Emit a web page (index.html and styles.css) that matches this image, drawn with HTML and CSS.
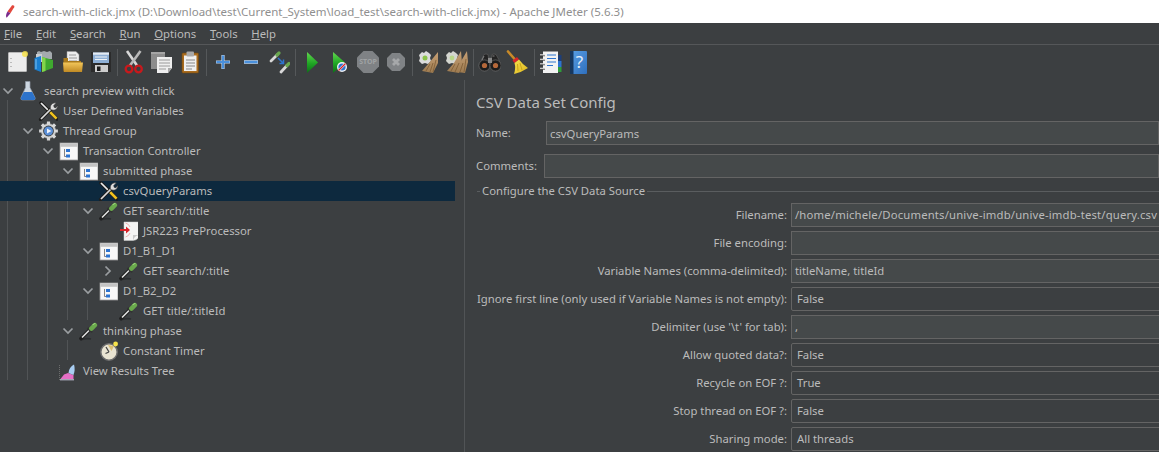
FILE: index.html
```html
<!DOCTYPE html>
<html lang="en">
<head>
<meta charset="utf-8">
<title>search-with-click.jmx - Apache JMeter (5.6.3)</title>
<link rel="stylesheet" href="styles.css">
</head>
<body>
<svg class="defs" width="0" height="0" aria-hidden="true">
  <defs>
    <linearGradient id="g-run" x1="0" y1="0" x2="0" y2="1"><stop offset="0" stop-color="#63d84f"/><stop offset=".55" stop-color="#1fa524"/><stop offset="1" stop-color="#0d6f18"/></linearGradient>
    <linearGradient id="g-folder" x1="0" y1="0" x2="0" y2="1"><stop offset="0" stop-color="#f2c65a"/><stop offset="1" stop-color="#c08a24"/></linearGradient>
    <linearGradient id="g-help" x1="0" y1="0" x2="1" y2="1"><stop offset="0" stop-color="#5aa0e6"/><stop offset="1" stop-color="#2f6fbd"/></linearGradient>
    <linearGradient id="g-broom" x1="0" y1="0" x2="0" y2="1"><stop offset="0" stop-color="#c7a075"/><stop offset="1" stop-color="#9c7a50"/></linearGradient>
    <linearGradient id="g-yellow" x1="0" y1="0" x2="1" y2="1"><stop offset="0" stop-color="#f8e24a"/><stop offset="1" stop-color="#dcb420"/></linearGradient>
    <symbol id="i-tools" viewBox="0 0 20 20">
      <path d="M3 2 L19 18" stroke="#1e1e1e" stroke-width="3.6" stroke-linecap="round"/>
      <path d="M3 2 L10 9" stroke="#ececec" stroke-width="1.7"/>
      <path d="M10 9 L18.6 17.6" stroke="#f0c21f" stroke-width="2.6"/>
      <path d="M2.5 18.5 L13 8" stroke="#1e1e1e" stroke-width="3.2" stroke-linecap="round"/>
      <path d="M3 18 L13 8" stroke="#dcdcdc" stroke-width="1.7"/>
      <path d="M12.5 8.5 C11.2 4.5 14.4 1 18.4 2 L15.8 4.6 L16.2 6.3 L17.9 6.8 L19.8 4.2 C20.4 8.2 16.5 10.5 12.5 8.5Z" fill="#dedede" stroke="#2a2a2a" stroke-width=".7"/>
    </symbol>
    <symbol id="i-flask" viewBox="0 0 20 20">
      <path d="M7.5 .5 H12 V6.5 L17 16.5 Q17.7 19 15.5 19 H4.5 Q2.3 19 3 16.5 L7.5 6.5Z" fill="#ccd6e0" stroke="#8c97a3" stroke-width=".7"/>
      <path d="M5.8 11 H14.2 L17 16.5 Q17.7 19 15.5 19 H4.5 Q2.3 19 3 16.5Z" fill="#2c73cb"/>
    </symbol>
    <symbol id="i-gear" viewBox="0 0 20 20">
      <circle cx="10.5" cy="10" r="7.4" fill="#cfcfcf" stroke="#8a8a8a" stroke-width=".6"/>
      <path d="M10.5 .6 V19.4 M1.1 10 H19.9 M3.9 3.4 L17.1 16.6 M17.1 3.4 L3.9 16.6" stroke="#d8d8d8" stroke-width="3.2"/>
      <circle cx="10.5" cy="10" r="5.4" fill="#3c3f41"/>
      <circle cx="10.5" cy="10" r="4.5" fill="#5b8fd6"/>
      <path d="M9 7.4 L13.4 10 L9 12.6Z" fill="#eef2fb"/>
    </symbol>
    <symbol id="i-ctrl" viewBox="0 0 20 20">
      <rect x="2" y="2" width="18" height="17" fill="#f8f8f8" stroke="#9a9a9a" stroke-width=".8"/>
      <rect x="2.4" y="2.4" width="17.2" height="3.4" fill="#c4c4c4"/>
      <path d="M6.5 8 V15.5 H9" stroke="#666" fill="none" stroke-width=".8"/>
      <rect x="8" y="8" width="4" height="3" fill="#2d74d0"/>
      <rect x="8" y="13.5" width="4" height="3" fill="#2d74d0"/>
    </symbol>
    <symbol id="i-dropper" viewBox="0 0 20 20">
      <path d="M2.5 19 Q8 17 13 18" stroke="#2c2e30" stroke-width="1.6" fill="none"/>
      <path d="M3 17.5 L11 9.5" stroke="#1f1f1f" stroke-width="3.6" stroke-linecap="round"/>
      <path d="M4 16.5 L11 9.5" stroke="#e2e2e2" stroke-width="1.6"/>
      <path d="M9.6 6.8 L14.2 11.4" stroke="#333" stroke-width="2"/>
      <path d="M13.4 7.6 L16.8 4.2" stroke="#69a94c" stroke-width="4.6" stroke-linecap="round"/>
      <path d="M15 3.6 L17 2.4" stroke="#9fd47f" stroke-width="1.1" stroke-linecap="round"/>
    </symbol>
    <symbol id="i-script" viewBox="0 0 20 20">
      <path d="M6 1 H21 V14 Q21 19 15 19.5 H6Z" fill="#f4f4f4" stroke="#cfcfcf" stroke-width=".5"/>
      <path d="M15 19.5 Q16 15 21 14 Q17 14 15 14Z" fill="#c9c9c9"/>
      <path d="M2 9 H9" stroke="#d8232a" stroke-width="2"/>
      <path d="M8 5.5 L12 9 L8 12.5Z" fill="#d8232a"/>
      <path d="M7.5 2 Q11 3 12 6 M7.5 16 Q11 15 12 12" stroke="#e8a0a0" fill="none" stroke-width=".8"/>
    </symbol>
    <symbol id="i-timer" viewBox="0 0 20 20">
      <circle cx="11" cy="11" r="8.2" fill="#e9e4d2" stroke="#6e6e6e" stroke-width="1.5"/>
      <path d="M11 11 L8 6 M11 11 L7.5 12.5" stroke="#444" stroke-width="1.3"/>
      <path d="M10 4 L13.5 10 L16 5Z" fill="#d9bd73"/>
      <circle cx="17.6" cy="3" r="2.4" fill="#f6e34a"/>
    </symbol>
    <symbol id="i-results" viewBox="0 0 20 20">
      <path d="M2.5 18 L6 13.5 L10 12 L15.5 14 V18Z" fill="#e56fc6"/>
      <path d="M2 18.8 H16" stroke="#cfd0e6" stroke-width="1"/>
      <path d="M10.5 12 Q11 6 16 3.5 Q17.5 9 15.5 14Z" fill="#a8cdf2"/>
      <path d="M1.5 4 V19" stroke="#777" stroke-width=".8" stroke-dasharray="1 1"/>
    </symbol>

    <symbol id="t-new" viewBox="0 0 24 24">
      <rect x="4.5" y="2.5" width="18" height="19" rx=".5" fill="#ececec" stroke="#cfcfcf" stroke-width=".6"/>
      <path d="M7 8 V9 M7 12 V13 M7 16 V17" stroke="#8a8a8a"/>
      <circle cx="21" cy="4" r="3" fill="#f4e04a" opacity=".85"/>
    </symbol>
    <symbol id="t-templates" viewBox="0 0 24 24">
      <path d="M5 2 L7 1 L9 2 L12 1 L15 2 L18 1 L20 3 V9 H5Z" fill="#a4aaae"/>
      <path d="M4 4 H10 V12 H4Z" fill="#c9cdd0"/>
      <path d="M2.5 8 L9 6 V22 L2.5 19.5Z" fill="#1a7fd0"/>
      <path d="M4 9 V19" stroke="#7fc0ec" stroke-width="1"/>
      <path d="M10 7 L21 10 V18 L10 22Z" fill="#3fa92f"/>
      <path d="M10 7 L13.5 8 V21 L10 22Z" fill="#82d44a"/>
    </symbol>
    <symbol id="t-open" viewBox="0 0 24 24">
      <path d="M7 1.5 H16 L19 4.5 V13 H7Z" fill="#ededed" stroke="#999" stroke-width=".5"/>
      <path d="M9 5 H16 M9 8 H17 M9 11 H17" stroke="#9a9a9a"/>
      <path d="M3.5 8 H8 V11 H21 V21.5 H3.5Z" fill="#a8791b"/>
      <path d="M3 12.5 H23 L22 22 H4Z" fill="url(#g-folder)"/>
    </symbol>
    <symbol id="t-save" viewBox="0 0 24 24">
      <path d="M3 2 H23 V22 H3Z" fill="#2b2b2b"/>
      <rect x="5" y="2.5" width="16" height="10.5" fill="#8fb0d6"/>
      <rect x="5" y="2.5" width="16" height="2.2" fill="#e4ebf3"/>
      <path d="M7 7 H19 M7 9.5 H19" stroke="#eef3f8"/>
      <rect x="7" y="15" width="13" height="7" fill="#cdcdcd"/>
      <rect x="9" y="16.5" width="3.5" height="4.5" fill="#1d1d1d"/>
    </symbol>
    <symbol id="t-cut" viewBox="0 0 24 24">
      <path d="M6 1 L16 15.5" stroke="#d8d8d8" stroke-width="2.6"/>
      <path d="M19.5 1 L9 15.5" stroke="#b9b9b9" stroke-width="2.6"/>
      <circle cx="8" cy="19" r="3.3" fill="none" stroke="#c8191c" stroke-width="2.3"/>
      <circle cx="17.5" cy="19" r="3.3" fill="none" stroke="#c8191c" stroke-width="2.3"/>
    </symbol>
    <symbol id="t-copy" viewBox="0 0 24 24">
      <rect x="2" y="2" width="14" height="17" fill="#8c8c8c"/>
      <path d="M2 2 H16 V4 H2Z" fill="#a5a5a5"/>
      <path d="M8 7 H23 V18 L19 23 H8Z" fill="#efefef"/>
      <path d="M19 23 V18 H23Z" fill="#a9a9a9"/>
      <path d="M10 10 H21 M10 13 H21 M10 16 H21 M10 19 H17" stroke="#9a9a9a"/>
    </symbol>
    <symbol id="t-paste" viewBox="0 0 24 24">
      <rect x="5" y="3" width="16.5" height="20" rx="1" fill="#a96c1f" stroke="#70460f" stroke-width=".6"/>
      <rect x="7" y="5.5" width="12.5" height="15.5" fill="#f0f0f0"/>
      <rect x="9.5" y="1.5" width="7.5" height="5" rx="1" fill="#a9a9a9"/>
      <path d="M9 10 H18 M9 13 H18 M9 16 H18 M9 19 H15" stroke="#888"/>
    </symbol>
    <symbol id="t-plus" viewBox="0 0 24 24">
      <path d="M13 5 V19 M6 12 H20" stroke="#b9d3ef" stroke-width="3.2"/>
      <path d="M13 5.5 V18.5 M6.5 12 H19.5" stroke="#4a90dc" stroke-width="2"/>
    </symbol>
    <symbol id="t-minus" viewBox="0 0 24 24">
      <path d="M6 12 H20" stroke="#b9d3ef" stroke-width="3.6"/>
      <path d="M6.5 12 H19.5" stroke="#4a90dc" stroke-width="2.2"/>
    </symbol>
    <symbol id="t-toggle" viewBox="0 0 24 24">
      <path d="M5 11 L11 5" stroke="#d8d8d8" stroke-width="2.8" stroke-linecap="round"/>
      <path d="M11 5 L13 3" stroke="#6aa84f" stroke-width="3.2" stroke-linecap="round"/>
      <path d="M15 22 L21 15.5" stroke="#d8d8d8" stroke-width="2.8" stroke-linecap="round"/>
      <path d="M21 15.5 L23 13.5" stroke="#6aa84f" stroke-width="3.2" stroke-linecap="round"/>
      <path d="M12 8 L17 13 M17.5 9.5 V13.5 H13.5" stroke="#2d74d0" stroke-width="1.5" fill="none"/>
    </symbol>
    <symbol id="t-run" viewBox="0 0 24 24">
      <path d="M8 2 L19 12.5 L8 23Z" fill="url(#g-run)"/>
    </symbol>
    <symbol id="t-runno" viewBox="0 0 24 24">
      <path d="M6 2 L18 12.5 L6 23Z" fill="url(#g-run)"/>
      <circle cx="15" cy="17" r="5" fill="#f2f4f8"/>
      <circle cx="15" cy="17" r="3.6" fill="#2d74d0"/>
      <path d="M11.5 20.5 L18.5 13.5" stroke="#f2f4f8" stroke-width="2.4"/>
      <path d="M11.5 20.5 L18.5 13.5" stroke="#d8232a" stroke-width="1.3"/>
    </symbol>
    <symbol id="t-stop" viewBox="0 0 24 24">
      <path d="M8.5 1 H17.5 L24 7.5 V16.5 L17.5 23 H8.5 L2 16.5 V7.5Z" fill="#7f8285"/>
    </symbol>
    <symbol id="t-shut" viewBox="0 0 24 24">
      <path d="M9 3 H17 L22 8 V16 L17 21 H9 L4 16 V8Z" fill="#808386"/>
      <path d="M10 9 L16 15 M16 9 L10 15" stroke="#a6a8aa" stroke-width="2.8"/>
    </symbol>
    <symbol id="t-clear" viewBox="0 0 24 24">
      <path d="M3 5 L6 2 L8 3 L10 1 L13 3 L15 5 L14 8 L15 11 L12 14 L9 13 L6 14 L3 11 L4 8Z" fill="#dcdcdc"/>
      <circle cx="9" cy="8" r="2.5" fill="#8bc34a"/>
      <path d="M13 13 L22 2 L22 13 L17 23 L6 21Z" fill="url(#g-broom)"/>
      <path d="M14 14 L10 21 M17 13 L14 22 M20 10 L17 22" stroke="#7d5c34" stroke-width=".8"/>
    </symbol>
    <symbol id="t-clearall" viewBox="0 0 24 24">
      <path d="M2 5 L5 2 L7 3 L9 1 L12 3 L14 5 L13 8 L14 11 L11 14 L8 13 L5 14 L2 11 L3 8Z" fill="#d4d6d0"/>
      <circle cx="8" cy="8" r="2.4" fill="#b9d88a"/>
      <path d="M10 13 L17 1 L18 13 L15 23 L3 21Z" fill="url(#g-broom)"/>
      <path d="M16 13 L23 1 L24 12 L21 23 L13 22Z" fill="url(#g-broom)"/>
      <path d="M11 14 L7 21 M15 13 L11 22 M19 13 L16 22 M22 9 L20 22" stroke="#7d5c34" stroke-width=".8"/>
    </symbol>
    <symbol id="t-search" viewBox="0 0 24 24">
      <path d="M5 9 L7 4.5 Q9 3.5 11 4.5 L11.5 8 H14.5 L15 4.5 Q17 3.5 19 4.5 L22 10 L24 16 H2Z" fill="#232323" stroke="#6a6a6a" stroke-width=".5"/>
      <circle cx="7.5" cy="15.5" r="5.6" fill="#1c1c1c" stroke="#777" stroke-width=".6"/>
      <circle cx="18.5" cy="15.5" r="5.6" fill="#1c1c1c" stroke="#777" stroke-width=".6"/>
      <circle cx="7.5" cy="15.5" r="2.6" fill="#b5683a"/>
      <circle cx="18.5" cy="15.5" r="2.6" fill="#b5683a"/>
      <rect x="11" y="8" width="4" height="5" fill="#8a8a8a"/>
      <path d="M7 6 L5 10 M15.5 6 L17.5 6" stroke="#9a9a9a" stroke-width=".8"/>
    </symbol>
    <symbol id="t-broom" viewBox="0 0 24 24">
      <path d="M3 1.5 L10 9.5" stroke="#c88a28" stroke-width="2.6" stroke-linecap="round"/>
      <path d="M7.5 10.5 L12 7 L14 9.5 L9.5 13Z" fill="#d8232a"/>
      <path d="M9.5 13 L14 9.5 Q18 15 23 18 Q17 22 9 24 Q11 18 9.5 13Z" fill="url(#g-yellow)"/>
      <path d="M12.5 14 L13 21 M15 13 L17 20" stroke="#c19a14" stroke-width=".8"/>
    </symbol>
    <symbol id="t-log" viewBox="0 0 24 24">
      <rect x="5" y="1.5" width="15" height="21.5" fill="#f2f2f2"/>
      <path d="M2 5 H7 M2 9.5 H7 M2 14 H7 M2 18.5 H7" stroke="#e0e0e0" stroke-width="1.7"/>
      <path d="M2 5.8 H7 M2 10.3 H7 M2 14.8 H7 M2 19.3 H7" stroke="#333" stroke-width=".7"/>
      <path d="M9 5 H18 M9 8.5 H18 M9 12 H18 M9 15.5 H15" stroke="#2d74d0"/>
      <rect x="20" y="5" width="3.5" height="6" fill="#1d3f7a"/>
      <rect x="20" y="11" width="3.5" height="6" fill="#2d74d0"/>
      <rect x="20" y="17" width="3.5" height="5" fill="#2e9e3a"/>
    </symbol>
    <symbol id="t-help" viewBox="0 0 24 24">
      <rect x="4" y="1" width="17" height="23" rx="1" fill="url(#g-help)"/>
      <rect x="4" y="1" width="3.5" height="23" fill="#17375e"/>
    </symbol>
    <symbol id="c-down" viewBox="0 0 12 12">
      <path d="M1.5 3.5 L6 8 L10.5 3.5" fill="none" stroke="#9a9ea1" stroke-width="1.7"/>
    </symbol>
    <symbol id="c-right" viewBox="0 0 12 12">
      <path d="M3.5 1.5 L8 6 L3.5 10.5" fill="none" stroke="#9a9ea1" stroke-width="1.7"/>
    </symbol>
  </defs>
</svg>

<header class="titlebar">
  <svg class="title-icon" viewBox="0 0 12 16"><path d="M8.5 .5 Q12 0 11 3 L6.5 10 L3 8Z" fill="#e2483d"/><path d="M3 8 L6.5 10 L2 15.5 Q0 13 3 8Z" fill="#7a2a8c"/></svg>
  <span>search-with-click.jmx (D:\Download\test\Current_System\load_test\search-with-click.jmx) - Apache JMeter (5.6.3)</span>
</header>

<nav class="menubar">
  <span class="menu"><u>F</u>ile</span>
  <span class="menu"><u>E</u>dit</span>
  <span class="menu"><u>S</u>earch</span>
  <span class="menu"><u>R</u>un</span>
  <span class="menu"><u>O</u>ptions</span>
  <span class="menu"><u>T</u>ools</span>
  <span class="menu"><u>H</u>elp</span>
</nav>

<div class="toolbar">
  <span class="btn"><svg class="tb"><use href="#t-new"/></svg></span>
  <span class="btn"><svg class="tb"><use href="#t-templates"/></svg></span>
  <span class="btn"><svg class="tb"><use href="#t-open"/></svg></span>
  <span class="btn"><svg class="tb"><use href="#t-save"/></svg></span>
  <i class="sep"></i>
  <span class="btn"><svg class="tb"><use href="#t-cut"/></svg></span>
  <span class="btn"><svg class="tb"><use href="#t-copy"/></svg></span>
  <span class="btn"><svg class="tb"><use href="#t-paste"/></svg></span>
  <i class="sep"></i>
  <span class="btn"><svg class="tb"><use href="#t-plus"/></svg></span>
  <span class="btn"><svg class="tb"><use href="#t-minus"/></svg></span>
  <span class="btn"><svg class="tb"><use href="#t-toggle"/></svg></span>
  <i class="sep"></i>
  <span class="btn"><svg class="tb"><use href="#t-run"/></svg></span>
  <span class="btn"><svg class="tb"><use href="#t-runno"/></svg></span>
  <span class="btn"><svg class="tb"><use href="#t-stop"/></svg><b class="stop-label">STOP</b></span>
  <span class="btn"><svg class="tb"><use href="#t-shut"/></svg></span>
  <i class="sep"></i>
  <span class="btn"><svg class="tb"><use href="#t-clear"/></svg></span>
  <span class="btn"><svg class="tb"><use href="#t-clearall"/></svg></span>
  <i class="sep"></i>
  <span class="btn"><svg class="tb"><use href="#t-search"/></svg></span>
  <span class="btn"><svg class="tb"><use href="#t-broom"/></svg></span>
  <i class="sep"></i>
  <span class="btn"><svg class="tb"><use href="#t-log"/></svg></span>
  <span class="btn"><svg class="tb"><use href="#t-help"/></svg><b class="help-label">?</b></span>
</div>

<main class="workspace">
  <section class="tree">
    <i class="guide g1"></i><i class="guide g2"></i><i class="guide g3"></i><i class="guide g4"></i><i class="guide g5"></i><i class="guide g6"></i><i class="guide g7"></i><i class="guide g8"></i>
    <div class="row l0"><svg class="chev"><use href="#c-down"/></svg><svg class="nico"><use href="#i-flask"/></svg><span>search preview with click</span></div>
    <div class="row l1"><span class="nochev"></span><svg class="nico"><use href="#i-tools"/></svg><span>User Defined Variables</span></div>
    <div class="row l1"><svg class="chev"><use href="#c-down"/></svg><svg class="nico"><use href="#i-gear"/></svg><span>Thread Group</span></div>
    <div class="row l2"><svg class="chev"><use href="#c-down"/></svg><svg class="nico"><use href="#i-ctrl"/></svg><span>Transaction Controller</span></div>
    <div class="row l3"><svg class="chev"><use href="#c-down"/></svg><svg class="nico"><use href="#i-ctrl"/></svg><span>submitted phase</span></div>
    <div class="row l4 selected"><span class="nochev"></span><svg class="nico"><use href="#i-tools"/></svg><span>csvQueryParams</span></div>
    <div class="row l4"><svg class="chev"><use href="#c-down"/></svg><svg class="nico"><use href="#i-dropper"/></svg><span>GET search/:title</span></div>
    <div class="row l5"><span class="nochev"></span><svg class="nico"><use href="#i-script"/></svg><span>JSR223 PreProcessor</span></div>
    <div class="row l4"><svg class="chev"><use href="#c-down"/></svg><svg class="nico"><use href="#i-ctrl"/></svg><span>D1_B1_D1</span></div>
    <div class="row l5"><svg class="chev"><use href="#c-right"/></svg><svg class="nico"><use href="#i-dropper"/></svg><span>GET search/:title</span></div>
    <div class="row l4"><svg class="chev"><use href="#c-down"/></svg><svg class="nico"><use href="#i-ctrl"/></svg><span>D1_B2_D2</span></div>
    <div class="row l5"><span class="nochev"></span><svg class="nico"><use href="#i-dropper"/></svg><span>GET title/:titleId</span></div>
    <div class="row l3"><svg class="chev"><use href="#c-down"/></svg><svg class="nico"><use href="#i-dropper"/></svg><span>thinking phase</span></div>
    <div class="row l4"><span class="nochev"></span><svg class="nico"><use href="#i-timer"/></svg><span>Constant Timer</span></div>
    <div class="row l2"><span class="nochev"></span><svg class="nico"><use href="#i-results"/></svg><span>View Results Tree</span></div>
  </section>
  <i class="strip"></i>
  <section class="panel">
    <h1>CSV Data Set Config</h1>
    <div class="named name-row"><label>Name:</label><div class="field">csvQueryParams</div></div>
    <div class="named comments-row"><label>Comments:</label><div class="field"></div></div>
    <fieldset class="group">
      <legend>Configure the CSV Data Source</legend>
      <div class="grid">
        <label>Filename:</label><div class="field path">/home/michele/Documents/unive-imdb/unive-imdb-test/query.csv</div>
        <label>File encoding:</label><div class="field"></div>
        <label>Variable Names (comma-delimited):</label><div class="field">titleName, titleId</div>
        <label>Ignore first line (only used if Variable Names is not empty):</label><div class="field combo">False</div>
        <label>Delimiter (use '\t' for tab):</label><div class="field">,</div>
        <label>Allow quoted data?:</label><div class="field combo">False</div>
        <label>Recycle on EOF ?:</label><div class="field combo">True</div>
        <label>Stop thread on EOF ?:</label><div class="field combo">False</div>
        <label>Sharing mode:</label><div class="field combo">All threads</div>
      </div>
    </fieldset>
  </section>
</main>
</body>
</html>
```
FILE: styles.css
```css
* { box-sizing: border-box; }
html, body { margin: 0; height: 100%; overflow: hidden; }
body {
  width: 1159px; height: 452px;
  background: #3c3f41;
  color: #bbbbbb;
  font: 11.3px/16px "Noto Sans", "Open Sans", sans-serif;
  display: flex; flex-direction: column;
}
.defs { position: absolute; }

.titlebar {
  height: 23px; flex: none;
  background: #fff; color: #8f8f8f;
  display: flex; align-items: center; gap: 8px;
  padding-left: 5px;
  font-size: 11.5px;
}
.title-icon { width: 10px; height: 15px; }

.menubar {
  height: 22px; flex: none;
  display: flex; align-items: center;
  padding-left: 4px; gap: 13.8px;
  border-bottom: 1px solid #555759;
}

.toolbar {
  height: 35px; flex: none;
  display: flex; align-items: center;
  padding: 0 0 1px 2px;
}
.btn { position: relative; width: 28px; height: 24px; flex: none; display: flex; justify-content: center; }
.tb { display: block; width: 24px; height: 24px; flex: none; overflow: visible; }
.sep { width: 5px; height: 27px; flex: none; position: relative; }
.sep::before { content: ""; position: absolute; left: 3px; top: 0; bottom: 0; width: 1px; background: #55585a; }
.stop-label { position: absolute; inset: 0; text-align: center; font-size: 7px; line-height: 24px; font-weight: 700; color: #a0a2a4; padding-left: 2px; }
.help-label { position: absolute; inset: 0; text-align: center; font-size: 17px; line-height: 24px; font-weight: 400; color: #e4eefa; padding-left: 3px; }

.workspace { flex: 1; display: flex; min-height: 0; }
.tree { width: 455px; flex: none; position: relative; padding-top: 1px; }
.strip { width: 10px; flex: none; border-right: 1px solid #515456; }
.panel { flex: 1; min-width: 0; padding: 12px 0 0 11px; overflow: hidden; }

.guide { position: absolute; width: 1px; background: #515456; }
.g1 { left: 7px; top: 20px; height: 280px; }
.g2 { left: 27px; top: 60px; height: 240px; }
.g3 { left: 47px; top: 80px; height: 200px; }
.g4 { left: 67px; top: 100px; height: 140px; }
.g5 { left: 87px; top: 140px; height: 20px; }
.g6 { left: 87px; top: 180px; height: 20px; }
.g7 { left: 87px; top: 220px; height: 20px; }
.g8 { left: 67px; top: 260px; height: 20px; }

.row { height: 20px; display: flex; align-items: center; white-space: nowrap; position: relative; }
.selected { background: #0d293e; }
.l0 { padding-left: 2px; }
.l1 { padding-left: 22px; }
.l2 { padding-left: 42px; }
.l3 { padding-left: 62px; }
.l4 { padding-left: 82px; }
.l5 { padding-left: 102px; }
.chev, .nochev { width: 12px; height: 12px; flex: none; display: block; }
.nico { width: 20px; height: 20px; flex: none; margin: 0 5px 0 4px; overflow: visible; }
.l0 .nico { margin-right: 6px; }

h1 { margin: 0; font-size: 15px; line-height: 20px; font-weight: 400; color: #bbbbbb; }
.named { display: flex; height: 24px; }
.named label { flex: none; height: 24px; padding-top: 1px; line-height: 22px; }
.named .field { padding-top: 1px; }
.name-row { margin-top: 9px; }
.name-row label { width: 70px; }
.comments-row { margin-top: 9px; }
.comments-row label { width: 68px; }
.field {
  height: 24px; flex: 1; min-width: 0;
  background: #45494a;
  border: 1px solid #646464;
  padding: 0 3px;
  line-height: 22px;
  white-space: nowrap;
  overflow: hidden;
}
.field.path { letter-spacing: .17px; }
.field.combo { padding-left: 5px; background: #3c3f41; border-radius: 2px; }
.group {
  margin: 5px -20px 0 1px; padding: 0;
  border: 0; border-top: 1px solid #5a5d5f;
}
.group legend { margin-left: 3px; padding: 0 2px; line-height: 16px; }
.grid {
  display: grid;
  grid-template-columns: 310px 372px;
  grid-auto-rows: 24px;
  row-gap: 4px;
  column-gap: 4px;
  margin-top: 4px;
}
.grid label { text-align: right; line-height: 24px; white-space: nowrap; }
```
